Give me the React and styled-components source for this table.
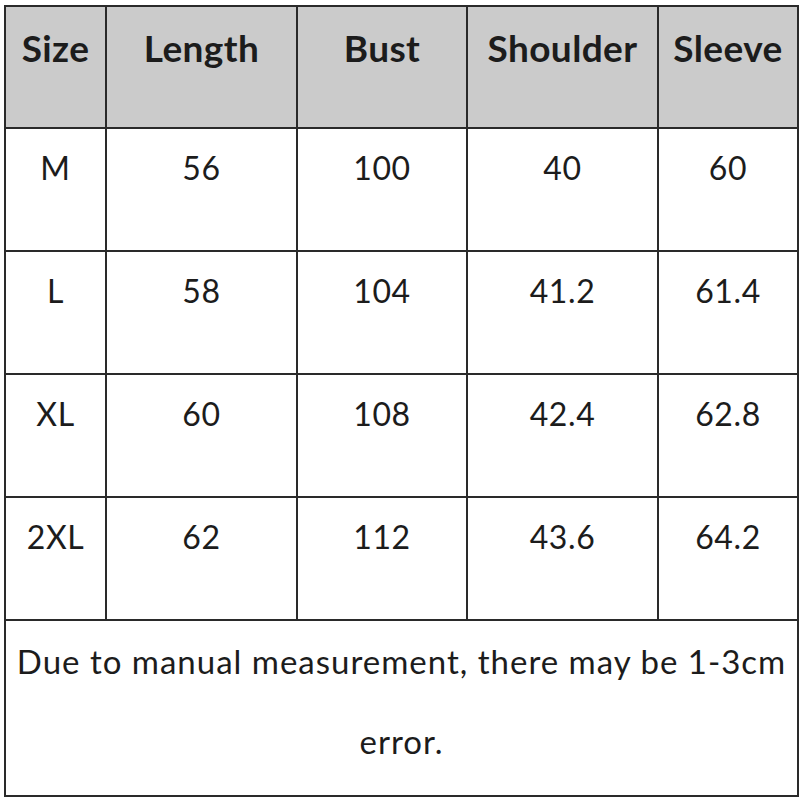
import React from "react";
import styled, {createGlobalStyle} from "styled-components";

const GlobalStyle = createGlobalStyle`
    html, body {
        margin: 0;
        padding: 0;
        background: #ffffff;
    }
    body {
        font-family: Lato, "Open Sans", "Liberation Sans", sans-serif;
    }
`;

const Page = styled.div`
    width: 800px;
    height: 800px;
    padding: 5px 3px 0 4px;
    box-sizing: border-box;
    background: #ffffff;
`;

const Table = styled.table`
    border-collapse: collapse;
    table-layout: fixed;
    width: 793px;
    color: #1c1c1c;
`;

const HeadCell = styled.th`
    background: #cbcbcb;
    border: 2px solid #2a2a2a;
    height: 122px;
    padding: 18px 0 0;
    vertical-align: top;
    text-align: center;
    font-size: 37px;
    font-weight: 700;
    letter-spacing: 0.4px;
    box-sizing: border-box;
`;

const Cell = styled.td`
    border: 2px solid #2a2a2a;
    height: 123px;
    padding: 19px 0 0;
    vertical-align: top;
    text-align: center;
    font-size: 32px;
    letter-spacing: 0.6px;
    box-sizing: border-box;
`;

const NoteCell = styled.td`
    border: 2px solid #2a2a2a;
    height: 176px;
    padding: 0 8px;
    vertical-align: top;
    text-align: center;
    font-size: 33px;
    letter-spacing: 1px;
    line-height: 80px;
    box-sizing: border-box;
`;

const widths = [101, 191, 170, 191, 140];
const heads = ["Size", "Length", "Bust", "Shoulder", "Sleeve"];
const rows = [
    ["M", "56", "100", "40", "60"],
    ["L", "58", "104", "41.2", "61.4"],
    ["XL", "60", "108", "42.4", "62.8"],
    ["2XL", "62", "112", "43.6", "64.2"],
];

export default function App() {
    return (
        <Page>
            <GlobalStyle/>
            <Table>
                <colgroup>
                    {widths.map((w, i) => <col key={i} style={{width: w}}/>)}
                </colgroup>
                <thead>
                <tr>
                    {heads.map((h) => <HeadCell key={h}>{h}</HeadCell>)}
                </tr>
                </thead>
                <tbody>
                {rows.map((r) => (
                    <tr key={r[0]}>
                        {r.map((v, i) => <Cell key={i}>{v}</Cell>)}
                    </tr>
                ))}
                <tr>
                    <NoteCell colSpan={5}>
                        Due to manual measurement, there may be 1-3cm error.
                    </NoteCell>
                </tr>
                </tbody>
            </Table>
        </Page>
    );
}
